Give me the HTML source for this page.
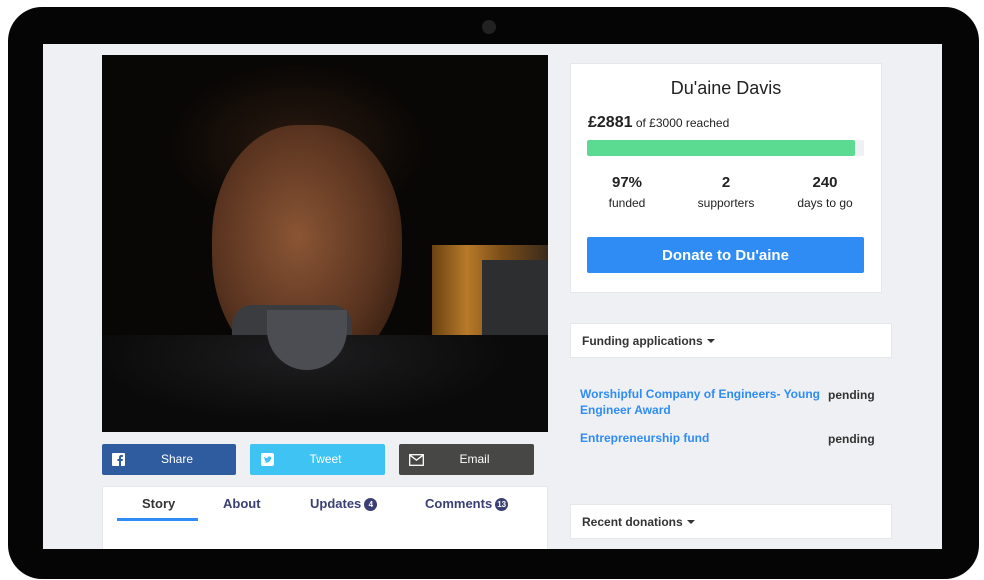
<!DOCTYPE html>
<html><head><meta charset="utf-8">
<style>
*{margin:0;padding:0;box-sizing:border-box}
body{width:984px;height:580px;background:#fff;position:relative;overflow:hidden;font-family:"Liberation Sans",sans-serif}
.a{position:absolute}
.frame{left:8px;top:7px;width:971px;height:572px;background:#050505;border-radius:34px}
.screen{left:43px;top:44px;width:899px;height:505px;background:#eff0f3;overflow:hidden}
.cam{left:482px;top:20px;width:14px;height:14px;border-radius:50%;background:#222}
.photo{left:59px;top:11px;width:446px;height:377px;background:#080706;overflow:hidden}
.btn{top:400px;height:31px;border-radius:2px;color:#fff;font-size:12px;line-height:31px;text-align:center;padding-left:16px}
.card{background:#fff;border:1px solid #e6e7ea}
.t{color:#222}
.tab{top:452px;font-size:13px;color:#3b3f73;font-weight:bold}
.badge{display:inline-block;width:13px;height:13px;border-radius:50%;background:#3b3f73;color:#fff;font-size:8px;line-height:13px;text-align:center;vertical-align:1px;margin-left:3px}
.stat{top:130px;width:90px;text-align:center;font-size:12px;color:#222}
.stat b{display:block;font-size:15px;margin-bottom:5px}
.link{color:#2f8cf5;font-size:12px;font-weight:bold;line-height:16px}
.pend{font-size:12px;color:#333;font-weight:bold}
.caret{display:inline-block;border-left:4px solid transparent;border-right:4px solid transparent;border-top:4px solid #333;vertical-align:2px;margin-left:4px}
</style></head><body>
<div class="a frame"></div>
<div class="a cam"></div>
<div class="a screen">
  <div class="a photo">
    <div class="a" style="left:330px;top:190px;width:116px;height:160px;background:linear-gradient(90deg,#6a4212,#b87a2a 30%,#7a4d18 60%,#3a2a1c);"></div>
    <div class="a" style="left:380px;top:205px;width:66px;height:140px;background:#2d2e30"></div>
    <div class="a" style="left:70px;top:10px;width:250px;height:160px;border-radius:50%;background:radial-gradient(#2a1a10,#0a0705 70%)"></div>
    <div class="a" style="left:110px;top:70px;width:190px;height:250px;border-radius:45% 45% 48% 48%;background:radial-gradient(ellipse at 45% 45%,#8a5534,#5a3420 55%,#2a170c 90%)"></div>
    <div class="a" style="left:130px;top:250px;width:120px;height:120px;background:#3a3c3f;border-radius:20px"></div>
    <div class="a" style="left:0;top:280px;width:446px;height:100px;background:radial-gradient(ellipse at 45% 20%,#1e1e20,#0a0a0a 60%)"></div>
    <div class="a" style="left:165px;top:255px;width:80px;height:60px;background:#4b4d52;border-radius:0 0 40px 40px"></div>
  </div>
  <div class="a btn" style="left:59px;width:134px;background:#2f5c9e">
    <svg class="a" style="left:10px;top:9px" width="13" height="13" viewBox="0 0 13 13"><rect width="13" height="13" rx="1" fill="#fff"/><path d="M9 13V8h1.6l.3-2H9V4.9c0-.6.2-1 1-1h1V2.2C10.6 2.1 10 2 9.4 2 8 2 7 2.9 7 4.4V6H5.5v2H7v5z" fill="#2f5c9e"/></svg>Share</div>
  <div class="a btn" style="left:207px;width:135px;background:#3fc3f3">
    <svg class="a" style="left:11px;top:9px" width="13" height="13" viewBox="0 0 13 13"><rect width="13" height="13" rx="2" fill="#fff"/><path d="M10.5 4.2c-.3.1-.6.2-.9.2.3-.2.6-.5.7-.9-.3.2-.6.3-1 .4-.6-.7-1.7-.7-2.3 0-.4.4-.5.9-.4 1.4C5.3 5.2 4.1 4.6 3.4 3.7c-.4.7-.2 1.5.5 2-.3 0-.5-.1-.7-.2 0 .8.5 1.4 1.300 1.6-.2.1-.5.1-.7 0 .2.7.8 1.1 1.5 1.1-.7.5-1.500.8-2.4.7.8.5 1.6.7 2.5.7 3 0 4.7-2.5 4.6-4.8.3-.2.6-.4.8-.7z" fill="#3fc3f3"/></svg>Tweet</div>
  <div class="a btn" style="left:356px;width:135px;background:#474745">
    <svg class="a" style="left:10px;top:10px" width="15" height="12" viewBox="0 0 15 12"><rect x=".7" y=".7" width="13.6" height="10.6" fill="none" stroke="#fff" stroke-width="1.3"/><path d="M1 1.2l6.5 5 6.5-5" fill="none" stroke="#fff" stroke-width="1.3"/></svg>Email</div>
  <div class="a card" style="left:59px;top:442px;width:446px;height:80px;border-bottom:none"></div>
  <div class="a tab" style="left:99px;color:#333">Story</div>
  <div class="a" style="left:74px;top:474px;width:81px;height:3px;background:#2f8cf5"></div>
  <div class="a tab" style="left:180px">About</div>
  <div class="a tab" style="left:267px">Updates<span class="badge">4</span></div>
  <div class="a tab" style="left:382px">Comments<span class="badge">13</span></div>

  <div class="a card" style="left:527px;top:19px;width:312px;height:230px"></div>
  <div class="a t" style="left:527px;top:34px;width:312px;text-align:center;font-size:18px">Du'aine Davis</div>
  <div class="a t" style="left:545px;top:70px;font-size:12px"><b style="font-size:16px">£2881</b> of £3000 reached</div>
  <div class="a" style="left:544px;top:96px;width:277px;height:16px;background:#eef0f2;border-radius:2px"></div>
  <div class="a" style="left:544px;top:96px;width:268px;height:16px;background:#5bda92;border-radius:2px"></div>
  <div class="a stat" style="left:539px"><b>97%</b>funded</div>
  <div class="a stat" style="left:638px"><b>2</b>supporters</div>
  <div class="a stat" style="left:737px"><b>240</b>days to go</div>
  <div class="a" style="left:544px;top:193px;width:277px;height:36px;background:#2f8cf5;border-radius:2px;color:#fff;font-weight:bold;font-size:15px;line-height:38px;text-align:center">Donate to Du'aine</div>

  <div class="a card" style="left:527px;top:279px;width:322px;height:35px;font-size:12px;font-weight:bold;color:#333;padding:10px 0 0 11px">Funding applications<span class="caret"></span></div>
  <div class="a link" style="left:537px;top:342px;width:240px">Worshipful Company of Engineers- Young Engineer Award</div>
  <div class="a pend" style="left:785px;top:344px">pending</div>
  <div class="a link" style="left:537px;top:386px">Entrepreneurship fund</div>
  <div class="a pend" style="left:785px;top:388px">pending</div>
  <div class="a card" style="left:527px;top:460px;width:322px;height:35px;font-size:12px;font-weight:bold;color:#333;padding:10px 0 0 11px">Recent donations<span class="caret"></span></div>
</div>
</body></html>
